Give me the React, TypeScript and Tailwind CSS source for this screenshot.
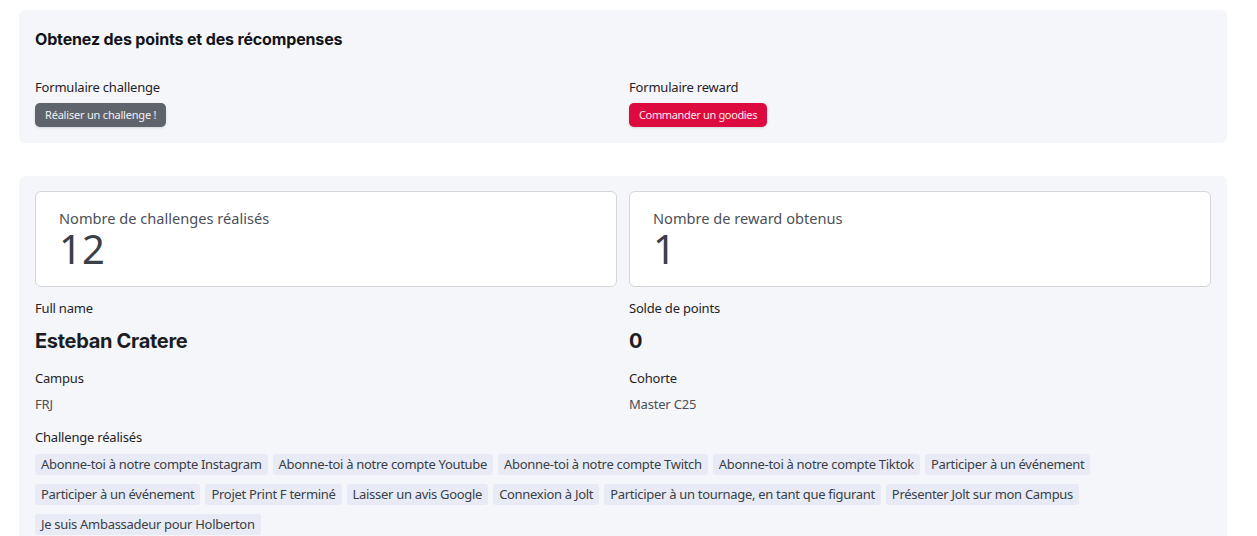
const LABEL = "text-[13px] leading-5 tracking-[-0.2px] text-[#1f2328]";
const VALUE = "text-[13px] leading-5 tracking-[-0.2px] text-[#4b5057]";
const TAG =
  "rounded-[3px] bg-[#e8ebf5] px-[6px] h-[21px] flex items-center text-[13px] tracking-[-0.3px] text-[#3a3f47]";

const challenges = [
  "Abonne-toi à notre compte Instagram",
  "Abonne-toi à notre compte Youtube",
  "Abonne-toi à notre compte Twitch",
  "Abonne-toi à notre compte Tiktok",
  "Participer à un événement",
  "Participer à un événement",
  "Projet Print F terminé",
  "Laisser un avis Google",
  "Connexion à Jolt",
  "Participer à un tournage, en tant que figurant",
  "Présenter Jolt sur mon Campus",
  "Je suis Ambassadeur pour Holberton",
];

function StatCard({ label, value }: { label: string; value: string }) {
  return (
    <div className="h-[96px] rounded-md border border-[#d4d6db] bg-white pl-[23px] pt-4">
      <div className="text-[14.6px] leading-5 text-[#4b5058]">{label}</div>
      <div className="text-[40px] leading-[42px] text-[#3b3f47]">{value}</div>
    </div>
  );
}

export default function App() {
  return (
    <div
      className="min-h-screen bg-white pl-[19px] pr-[30px] pt-[10px]"
      style={{ fontFamily: '"Noto Sans", sans-serif' }}
    >
      <section className="rounded-md bg-[#f5f6fa] px-4 pt-[17px] pb-4">
        <h1 className="font-['Inter',sans-serif] text-[16px] leading-6 font-bold tracking-[-0.15px] text-[#121418]">
          Obtenez des points et des récompenses
        </h1>
        <div className="mt-[26px] grid grid-cols-2 gap-3">
          <div>
            <div className={LABEL}>Formulaire challenge</div>
            <button className="mt-[6px] h-6 rounded-[5px] bg-[#5f636b] px-[10px] text-[11px] tracking-[-0.2px] text-[#f1f2f4] shadow-sm">
              Réaliser un challenge !
            </button>
          </div>
          <div>
            <div className={LABEL}>Formulaire reward</div>
            <button className="mt-[6px] h-6 rounded-[5px] bg-[#dc0a3e] px-[10px] text-[11px] tracking-[-0.35px] text-[#fde8ee] shadow-sm">
              Commander un goodies
            </button>
          </div>
        </div>
      </section>

      <section className="mt-[33px] rounded-md bg-[#f5f6fa] px-4 pt-[15px] pb-4">
        <div className="grid grid-cols-2 gap-3">
          <StatCard label="Nombre de challenges réalisés" value="12" />
          <StatCard label="Nombre de reward obtenus" value="1" />
        </div>

        <div className="mt-[11px] grid grid-cols-2 gap-x-3">
          <div>
            <div className={LABEL}>Full name</div>
            <div className="mt-[9px] font-['Inter',sans-serif] text-[20px] leading-7 font-bold tracking-[-0.3px] text-[#1b1d22]">
              Esteban Cratere
            </div>
            <div className={`mt-[13px] ${LABEL}`}>Campus</div>
            <div className={`mt-[6px] ${VALUE}`}>FRJ</div>
          </div>
          <div>
            <div className={LABEL}>Solde de points</div>
            <div className="mt-[9px] font-['Inter',sans-serif] text-[20px] leading-7 font-bold text-[#1b1d22]">
              0
            </div>
            <div className={`mt-[13px] ${LABEL}`}>Cohorte</div>
            <div className={`mt-[6px] ${VALUE}`}>Master C25</div>
          </div>
        </div>

        <div className={`mt-[13px] ${LABEL}`}>Challenge réalisés</div>
        <div className="mt-[7px] flex flex-wrap gap-x-[5px] gap-y-[9px]">
          {challenges.map((c, i) => (
            <span key={i} className={TAG}>
              {c}
            </span>
          ))}
        </div>
      </section>
    </div>
  );
}
